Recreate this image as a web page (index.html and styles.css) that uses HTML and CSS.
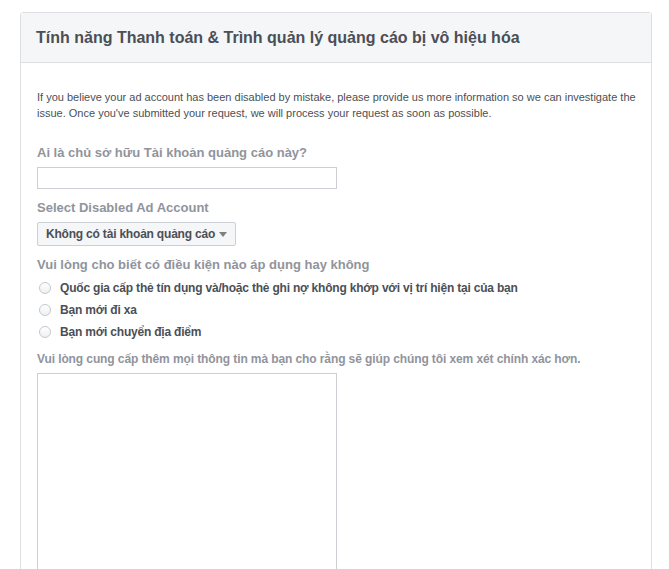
FILE: index.html
```html
<!DOCTYPE html>
<html lang="vi">
<head>
    <meta charset="UTF-8">
    <meta name="viewport" content="width=device-width, initial-scale=1.0">
    <title>Tính năng Thanh toán bị vô hiệu hóa</title>
    <link rel="stylesheet" href="styles.css">
</head>
<body>
    <div class="panel">
        <div class="panel-header">
            <h2>Tính năng Thanh toán &amp; Trình quản lý quảng cáo bị vô hiệu hóa</h2>
        </div>
        <div class="panel-body">
            <p class="intro">If you believe your ad account has been disabled by mistake, please provide us more information so we can investigate the issue. Once you've submitted your request, we will process your request as soon as possible.</p>

            <div class="field">
                <label class="label" for="owner">Ai là chủ sở hữu Tài khoản quảng cáo này?</label>
                <input type="text" class="text-input" id="owner">
            </div>

            <div class="field">
                <div class="label">Select Disabled Ad Account</div>
                <button class="select-btn">Không có tài khoản quảng cáo <span class="caret"></span></button>
            </div>

            <div class="field field-radios">
                <div class="label">Vui lòng cho biết có điều kiện nào áp dụng hay không</div>
                <label class="radio"><span class="dot"></span>Quốc gia cấp thẻ tín dụng và/hoặc thẻ ghi nợ không khớp với vị trí hiện tại của bạn</label>
                <label class="radio"><span class="dot"></span>Bạn mới đi xa</label>
                <label class="radio"><span class="dot"></span>Bạn mới chuyển địa điểm</label>
            </div>

            <div class="field">
                <label class="label label-long" for="details">Vui lòng cung cấp thêm mọi thông tin mà bạn cho rằng sẽ giúp chúng tôi xem xét chính xác hơn.</label>
                <textarea class="text-area" id="details"></textarea>
            </div>
        </div>
    </div>
</body>
</html>
```

FILE: styles.css
```css
* {
    margin: 0;
    padding: 0;
    box-sizing: border-box;
}

body {
    background: #fff;
    font-family: 'Liberation Sans', Arial, sans-serif;
    font-size: 12px;
    color: #4b4f56;
    padding: 12px 17px 0 20px;
}

.panel {
    border: 1px solid #dddfe2;
    border-radius: 3px;
    background: #fff;
}

.panel-header {
    background: #f5f6f7;
    border-bottom: 1px solid #dddfe2;
    padding: 15px 15px 14px;
}

.panel-header h2 {
    font-size: 16px;
    font-weight: bold;
    line-height: 20px;
    color: #4b4f56;
}

.panel-body {
    padding: 26px 8px 0 16px;
}

.intro {
    font-size: 11px;
    line-height: 16px;
    color: #4b4f56;
    margin-bottom: 24px;
}

.field {
    display: flex;
    flex-direction: column;
    align-items: flex-start;
    margin-bottom: 11px;
}

.label {
    font-size: 13px;
    font-weight: bold;
    color: #90949c;
    line-height: 16px;
    margin-bottom: 6px;
}

.label-long {
    font-size: 12px;
    letter-spacing: -0.1px;
}

.field-radios {
    margin-bottom: 8px;
}

.field-radios .label {
    margin-bottom: 4px;
}

.text-input {
    width: 300px;
    height: 22px;
    border: 1px solid #ccd0d5;
    background: #fff;
}

.select-btn {
    height: 24px;
    padding: 0 8px;
    border: 1px solid #ccd0d5;
    border-radius: 2px;
    background: #f5f6f7;
    font-family: inherit;
    font-size: 12px;
    font-weight: bold;
    letter-spacing: -0.2px;
    color: #4b4f56;
    display: flex;
    align-items: center;
    gap: 4px;
}

.caret {
    width: 0;
    height: 0;
    border-left: 4px solid transparent;
    border-right: 4px solid transparent;
    border-top: 5px solid #7f7f7f;
}

.radio {
    display: flex;
    align-items: center;
    height: 22px;
    font-weight: bold;
    letter-spacing: -0.2px;
    color: #4b4f56;
}

.dot {
    width: 12px;
    height: 12px;
    border-radius: 50%;
    border: 1px solid #c4c8cd;
    background: linear-gradient(#fff, #eef0f2);
    margin: 0 9px 0 2px;
}

.text-area {
    width: 300px;
    height: 260px;
    border: 1px solid #ccd0d5;
    resize: none;
}
```
